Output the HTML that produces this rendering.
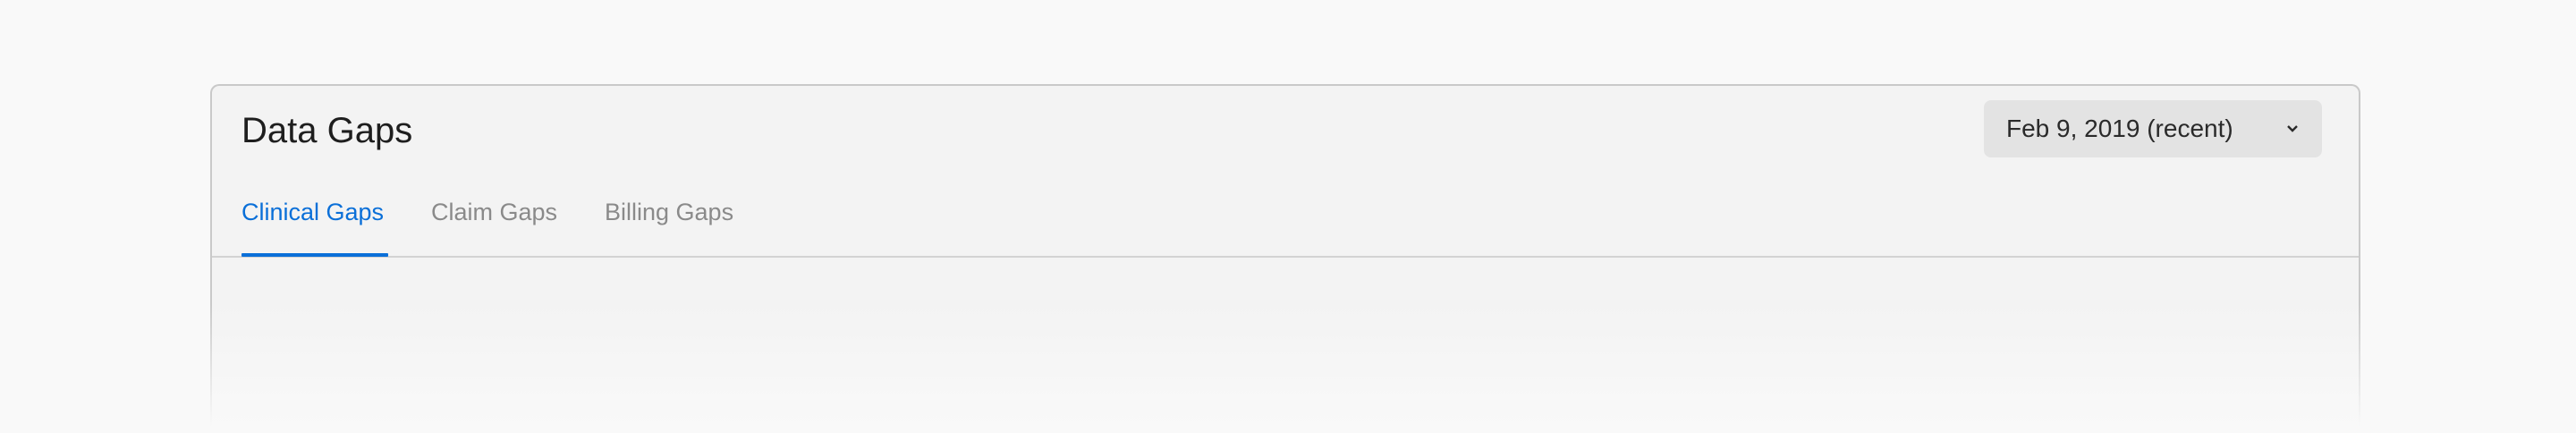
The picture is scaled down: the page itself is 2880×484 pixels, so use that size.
<!DOCTYPE html>
<html><head><style>
html,body{margin:0;padding:0;height:484px;overflow:hidden}
body{width:2880px;background:#f9f9f9;position:relative;font-family:"Liberation Sans",sans-serif}
.card{position:absolute;left:235px;top:94px;width:2404px;height:390px;background:#f3f3f3;border:2px solid #c9c9c9;border-bottom:0;border-radius:10px 10px 0 0;box-sizing:border-box}
.title{position:absolute;left:270px;top:122px;font-size:40px;line-height:48px;color:#1e1e1e}
.tab{position:absolute;top:220px;font-size:27px;line-height:34px;color:#8a8a8a}
.div{position:absolute;left:237px;width:2400px;top:286px;height:2px;background:#d2d2d2}
.ul{position:absolute;left:270px;top:283px;width:164px;height:4px;background:#0a6fd8;border-radius:1px}
.dd{position:absolute;left:2218px;top:112px;width:378px;height:64px;background:#e3e3e3;border-radius:8px}
.dd span{position:absolute;left:25px;top:15px;font-size:28px;line-height:34px;color:#2a2a2a}
.fade{position:absolute;left:0;top:340px;width:2880px;height:144px;background:linear-gradient(rgba(249,249,249,0),#f9f9f9 95%)}
</style></head><body>
<div class="card"></div>
<div class="title">Data Gaps</div>
<div class="tab" style="left:270px;color:#0a6fd8">Clinical Gaps</div>
<div class="tab" style="left:482px">Claim Gaps</div>
<div class="tab" style="left:676px">Billing Gaps</div>
<div class="div"></div>
<div class="ul"></div>
<div class="dd"><span>Feb 9, 2019 (recent)</span>
<svg style="position:absolute;left:338px;top:27px" width="14" height="10" viewBox="0 0 14 10"><path d="M2 2l5 5 5-5" fill="none" stroke="#2a2a2a" stroke-width="2.4"/></svg></div>
<div class="fade"></div>
</body></html>
